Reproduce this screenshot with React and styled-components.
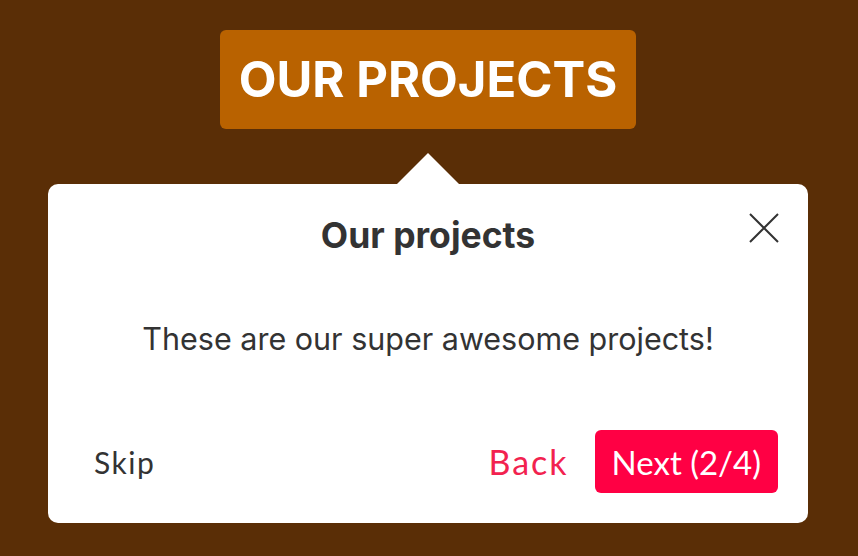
import React from "react";
import styled, { createGlobalStyle } from "styled-components";

const Global = createGlobalStyle`
	html, body {
		margin: 0;
		padding: 0;
		background: #5a2e06;
	}
	* {
		box-sizing: border-box;
	}
`;

export default function App() {
	return (
		<Page>
			<Global />
			<Banner>OUR PROJECTS</Banner>
			<Tooltip>
				<Close aria-label="Close">
					<svg width="30" height="30" viewBox="0 0 30 30">
						<path d="M1 1 L29 29 M29 1 L1 29" stroke="#333" strokeWidth="2" />
					</svg>
				</Close>
				<Title>Our projects</Title>
				<Body>These are our super awesome projects!</Body>
				<Footer>
					<TextButton>Skip</TextButton>
					<Actions>
						<TextButton accent>Back</TextButton>
						<PrimaryButton>Next (2/4)</PrimaryButton>
					</Actions>
				</Footer>
			</Tooltip>
		</Page>
	);
}

const Page = styled.div`
	height: 556px;
	display: flex;
	flex-direction: column;
	align-items: center;
	padding-top: 30px;
	padding-right: 2px;
`;

const Banner = styled.div`
	width: 416px;
	height: 99px;
	display: flex;
	align-items: center;
	justify-content: center;
	background: #b96200;
	border-radius: 6px;
	color: #fff;
	font-family: Inter, sans-serif;
	font-weight: 700;
	font-size: 49px;
`;

const Tooltip = styled.div`
	position: relative;
	margin-top: 55px;
	width: 760px;
	height: 339px;
	background: #fff;
	border-radius: 10px;
	display: flex;
	flex-direction: column;
	align-items: center;
	padding: 30px 30px 30px 30px;

	&::before {
		content: "";
		position: absolute;
		top: -31px;
		left: 348px;
		border-left: 32px solid transparent;
		border-right: 32px solid transparent;
		border-bottom: 32px solid #fff;
	}
`;

const Close = styled.button`
	position: absolute;
	top: 29px;
	right: 29px;
	width: 30px;
	height: 30px;
	padding: 0;
	border: 0;
	background: none;
	cursor: pointer;
	display: flex;
`;

const Title = styled.div`
	font-family: Inter, sans-serif;
	font-weight: 700;
	font-size: 35.5px;
	line-height: 44px;
	color: #333;
`;

const Body = styled.div`
	margin-top: 57px;
	font-family: Inter, sans-serif;
	font-size: 30.5px;
	line-height: 48px;
	color: #333;
`;

const Footer = styled.div`
	margin-top: auto;
	width: 100%;
	display: flex;
	align-items: center;
	justify-content: space-between;
	padding-left: 16px;
`;

const Actions = styled.div`
	display: flex;
	align-items: center;
	gap: 26px;
`;

const TextButton = styled.button`
	border: 0;
	background: none;
	padding: 0;
	font-family: Lato, sans-serif;
	font-size: ${({ accent }) => (accent ? "34px" : "30px")};
	letter-spacing: ${({ accent }) => (accent ? "2px" : "1.5px")};
	color: ${({ accent }) => (accent ? "#f2224f" : "#333")};
	cursor: pointer;
`;

const PrimaryButton = styled.button`
	height: 63px;
	border: 0;
	border-radius: 6px;
	background: #ff0044;
	color: #fff;
	padding: 0 17px;
	font-family: Lato, sans-serif;
	font-size: 33px;
	cursor: pointer;
`;
